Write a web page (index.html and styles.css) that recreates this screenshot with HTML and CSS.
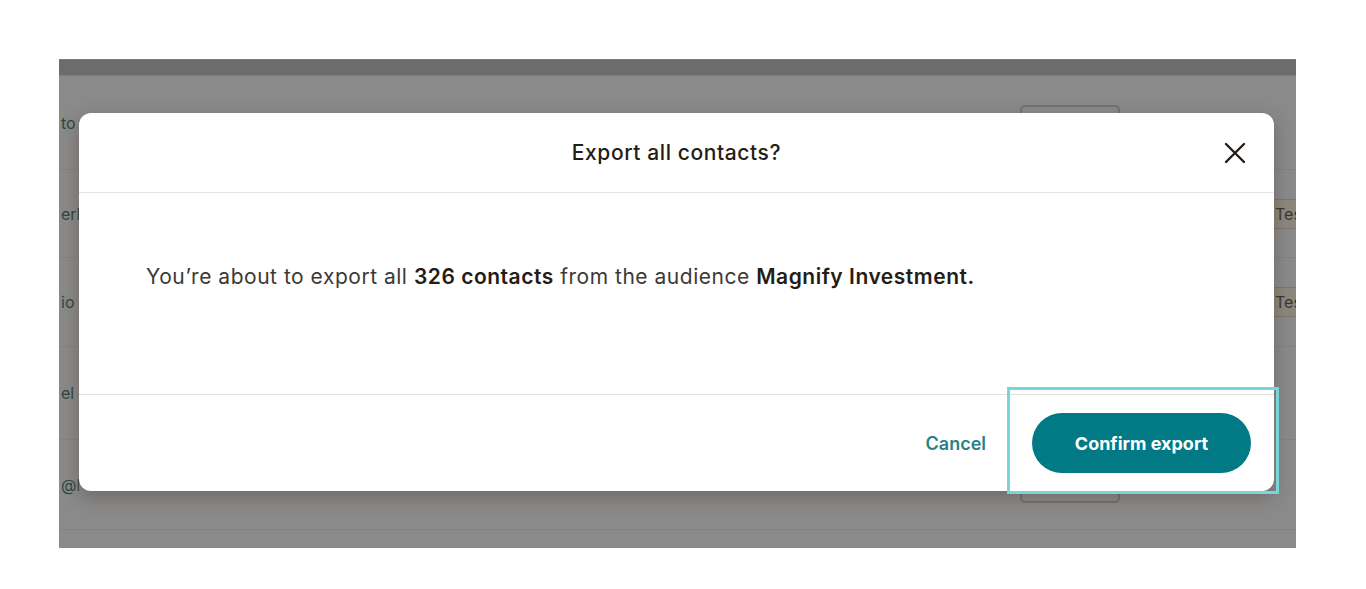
FILE: index.html
```html
<!DOCTYPE html>
<html lang="en">
<head>
<meta charset="utf-8">
<title>Export all contacts?</title>
<link rel="stylesheet" href="styles.css">
</head>
<body>
<div class="page">
  <div class="backdrop">
    <div class="topbar"></div>
    <div class="row r1"><span class="cell-name">to</span><span></span><span class="outline-box"></span><span></span><span class="chip-cell"></span></div>
    <div class="row r2"><span class="cell-name">erl</span><span></span><span class="outline-box"></span><span></span><span class="chip-cell"><span class="chip">Tes</span></span></div>
    <div class="row r3"><span class="cell-name">io</span><span></span><span class="outline-box"></span><span></span><span class="chip-cell"><span class="chip">Tes</span></span></div>
    <div class="row r4"><span class="cell-name">el</span><span></span><span></span><span></span><span class="chip-cell"></span></div>
    <div class="row r5"><span class="cell-name">@h</span><span></span><span class="outline-box"></span><span></span><span class="chip-cell"></span></div>

    <div class="modal" role="dialog" aria-labelledby="modal-title">
      <div class="modal-header">
        <h2 id="modal-title" class="modal-title">Export all contacts?</h2>
        <button class="close-btn" aria-label="Close">
          <svg width="22" height="22" viewBox="0 0 22 22"><path d="M2 2 L20 20 M20 2 L2 20" stroke="#241c15" stroke-width="2.4" stroke-linecap="round" fill="none"/></svg>
        </button>
      </div>
      <div class="modal-body">
        <p>You’re about to export all <strong>326 contacts</strong> from the audience <strong>Magnify Investment.</strong></p>
      </div>
      <div class="modal-footer">
        <button class="cancel-btn">Cancel</button>
        <button class="confirm-btn">Confirm export</button>
      </div>
    </div>
    <div class="highlight"></div>
  </div>
</div>
</body>
</html>
```
FILE: styles.css
```css
* { box-sizing: border-box; }
html, body { margin: 0; padding: 0; background: #ffffff; }
body { font-family: Inter, "Noto Sans", "Liberation Sans", sans-serif; }

.page {
  width: 1366px;
  height: 589px;
  padding: 59px 70px 0 59px;
}

.backdrop {
  position: relative;
  width: 1237px;
  height: 489px;
  background: #8a8a8a;
  overflow: hidden;
  border-top: 1px solid #7a7a7a;
}

.topbar {
  height: 16px;
  background: #6c6c6c;
  border-bottom: 1px solid #7d7d7d;
}

.row {
  display: grid;
  grid-template-columns: 20px 941px 100px 152px 24px;
  align-items: center;
  border-bottom: 1px solid #838383;
}
.r1 { height: 94px; }
.r2 { height: 88px; }
.r3 { height: 89px; }
.r4 { height: 93px; }
.r5 { height: 90px; }

.cell-name {
  font-size: 16px;
  color: #2e4743;
  white-space: nowrap;
  overflow: hidden;
  padding-left: 2px;
}

.outline-box {
  height: 36px;
  border: 2px solid #727272;
  border-radius: 5px;
}

.chip-cell { overflow: hidden; }
.chip {
  display: inline-block;
  padding: 4px 10px 4px 2px;
  background: #8c877c;
  border: 1px solid #7a766e;
  border-right: none;
  font-size: 16px;
  color: #3b3632;
}

.modal {
  position: absolute;
  left: 20px;
  top: 53px;
  width: 1195px;
  height: 378px;
  background: #ffffff;
  border-radius: 12px;
  box-shadow: 0 6px 18px rgba(60, 40, 30, 0.35);
  display: flex;
  flex-direction: column;
}

.modal-header {
  position: relative;
  height: 80px;
  border-bottom: 1px solid #e2e2e2;
  display: flex;
  align-items: center;
  justify-content: center;
}
.modal-title {
  margin: 0;
  font-size: 21px;
  font-weight: 500;
  letter-spacing: 0.6px;
  color: #241c15;
}
.close-btn {
  position: absolute;
  right: 28px;
  top: 29px;
  width: 22px;
  height: 22px;
  padding: 0;
  border: 0;
  background: none;
  display: flex;
}

.modal-body {
  height: 202px;
  padding: 70px 67px 0;
  border-bottom: 1px solid #e2e2e2;
}
.modal-body p {
  margin: 0;
  font-size: 21px;
  line-height: 28px;
  letter-spacing: 0.52px;
  color: #3d3935;
}
.modal-body strong { font-weight: 600; color: #241c15; }

.modal-footer {
  flex: 1;
  display: flex;
  align-items: center;
  justify-content: flex-end;
  padding: 0 23px 0 0;
  gap: 46px;
}
.cancel-btn {
  border: 0;
  background: none;
  font-family: inherit;
  font-size: 18px;
  font-weight: 600;
  color: #2a7f88;
  padding: 0;
}
.confirm-btn {
  width: 219px;
  height: 60px;
  border: 0;
  border-radius: 30px;
  background: #017a86;
  color: #ffffff;
  font-family: inherit;
  font-size: 18px;
  font-weight: 700;
}

.highlight {
  position: absolute;
  left: 948px;
  top: 327px;
  width: 272px;
  height: 107px;
  border: 3px solid #78d5da;
}
```
